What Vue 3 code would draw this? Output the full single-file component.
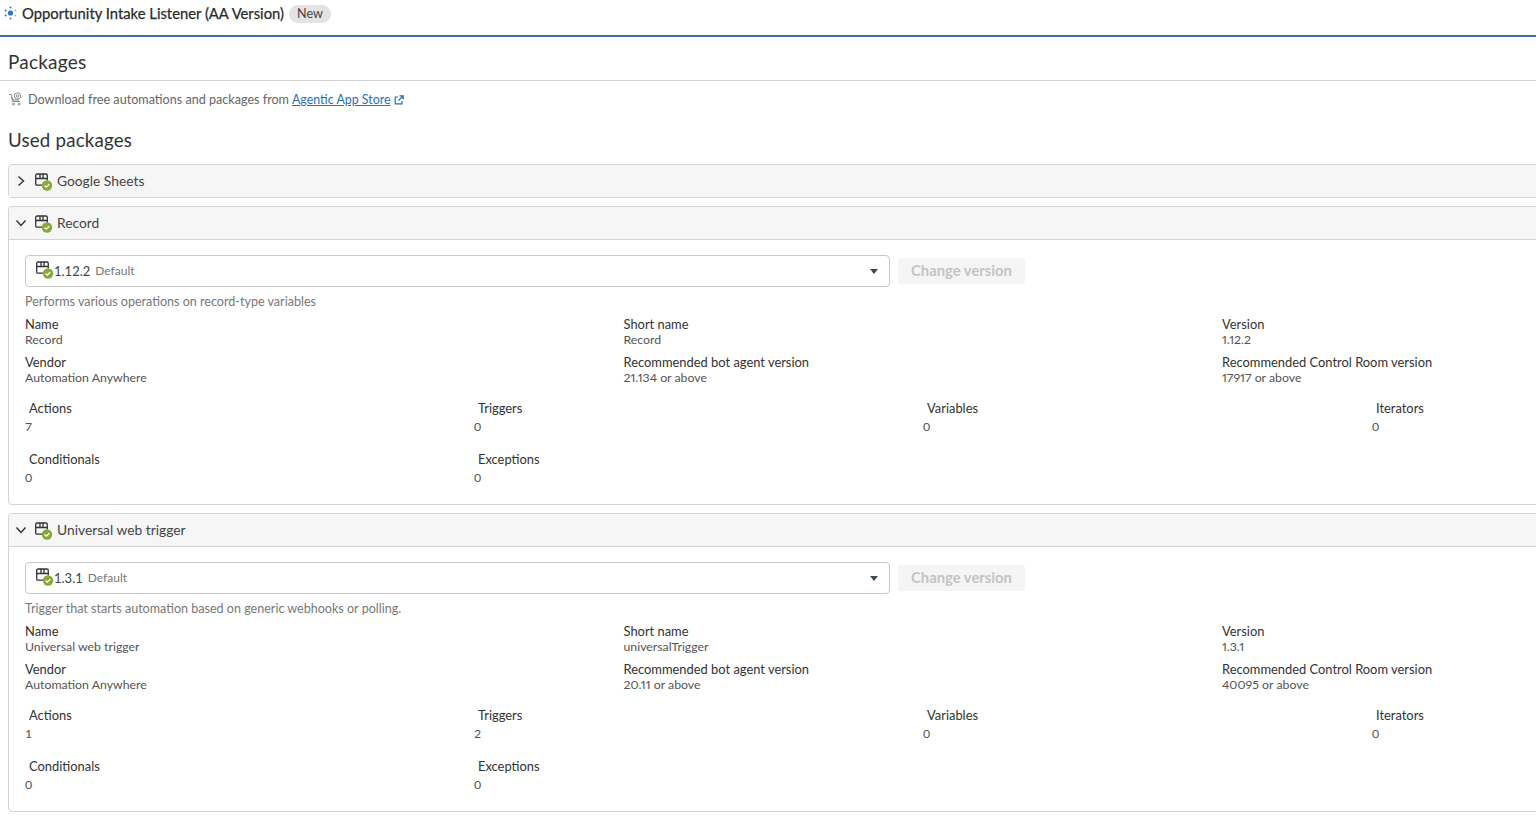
<template>
	<div class="page">
		<header class="title-bar">
			<svg class="bot-icon" width="14" height="14" viewBox="0 0 14 14">
				<circle cx="7.5" cy="7" r="2.6" fill="#2f6fc4" />
				<circle cx="7.5" cy="1.6" r="1" fill="#2f6fc4" />
				<circle cx="7.5" cy="12.4" r="1" fill="#2f6fc4" />
				<circle cx="2.6" cy="4.4" r="1" fill="#2f6fc4" />
				<circle cx="2.6" cy="9.6" r="1" fill="#2f6fc4" />
				<circle cx="12.4" cy="4.4" r="0.8" fill="#7aa5dc" />
				<circle cx="12.4" cy="9.6" r="0.8" fill="#7aa5dc" />
			</svg>
			<span class="bot-name">Opportunity Intake Listener (AA Version)</span>
			<span class="badge">New</span>
		</header>

		<h2 class="section-title">Packages</h2>

		<p class="store-note">
			<svg class="cart" width="16" height="15" viewBox="0 0 16 15" fill="none" stroke="#8a8a8a" stroke-width="1">
				<path d="M1 2.5h2l1.5 7h7.5" />
				<path d="M4 5l1 3h6" />
				<circle cx="9.5" cy="4" r="3.2" />
				<circle cx="9.5" cy="4" r="1.2" />
				<circle cx="5.5" cy="12" r="1" />
				<circle cx="11" cy="12" r="1" />
			</svg>
			<span>Download free automations and packages from</span>
			<a class="store-link">Agentic App Store</a>
			<svg class="ext" width="10" height="10" viewBox="0 0 10 10" fill="none" stroke="#2a6fb5" stroke-width="1.2">
				<path d="M4 2H1.2v6.8H8V6" />
				<path d="M5.5 0.8h3.7v3.7M9 1L4.5 5.5" />
			</svg>
		</p>

		<h3 class="used-title">Used packages</h3>

		<div class="panels">
			<section v-for="pkg in packages" :key="pkg.name" class="panel">
				<div class="panel-head">
					<svg class="chevron" width="12" height="12" viewBox="0 0 12 12" fill="none" stroke="#333" stroke-width="1.4">
						<path v-if="pkg.open" d="M1.5 3.5L6 8.5l4.5-5" />
						<path v-else d="M3.5 1.5L8.5 6l-5 4.5" />
					</svg>
					<svg class="pkg-icon" width="19" height="19" viewBox="0 0 19 19">
						<path d="M1.7 5.5V3.5q0-1.500 1.500-1.500h8.600q1.500 0 1.500 1.500v2 M1.700 5.500v6.500q0 1.200 1.200 1.200h5.500 M1.700 6.500h11.600 M6 2v4.500 M9 2v4.500 M13.300 5.500v3" fill="none" stroke="#333" stroke-width="1.300" />
						<circle cx="13" cy="13.500" r="5.200" fill="#8aa83a" />
						<path d="M10.600 13.500l1.700 1.700 3-3" fill="none" stroke="#fff" stroke-width="1.300" />
					</svg>
					<span class="pkg-name">{{ pkg.name }}</span>
				</div>

				<div v-if="pkg.open" class="panel-body">
					<div class="version-row">
						<div class="version-select">
							<svg class="pkg-icon small" width="19" height="19" viewBox="0 0 19 19">
								<path d="M1.7 5.5V3.5q0-1.500 1.500-1.500h8.600q1.500 0 1.500 1.500v2 M1.700 5.500v6.500q0 1.200 1.200 1.200h5.500 M1.700 6.500h11.600 M6 2v4.500 M9 2v4.500 M13.300 5.500v3" fill="none" stroke="#333" stroke-width="1.300" />
								<circle cx="13" cy="13.500" r="5.200" fill="#8aa83a" />
								<path d="M10.600 13.500l1.700 1.700 3-3" fill="none" stroke="#fff" stroke-width="1.300" />
							</svg>
							<span class="version-no">{{ pkg.version }}</span>
							<span class="version-tag">Default</span>
							<span class="caret"></span>
						</div>
						<button type="button" class="change-btn" disabled>Change version</button>
					</div>

					<p class="description">{{ pkg.description }}</p>

					<div class="info-grid">
						<div v-for="item in pkg.info" :key="item[0]" class="info-item">
							<div class="info-label">{{ item[0] }}</div>
							<div class="info-value">{{ item[1] }}</div>
						</div>
					</div>

					<div class="stats-grid">
						<div v-for="stat in pkg.stats" :key="stat[0]" class="stat-item">
							<div class="stat-label">{{ stat[0] }}</div>
							<div class="stat-value">{{ stat[1] }}</div>
						</div>
					</div>
				</div>
			</section>
		</div>
	</div>
</template>

<script setup>
const packages = [
	{ name: 'Google Sheets', open: false },
	{
		name: 'Record',
		open: true,
		version: '1.12.2',
		description: 'Performs various operations on record-type variables',
		info: [
			['Name', 'Record'],
			['Short name', 'Record'],
			['Version', '1.12.2'],
			['Vendor', 'Automation Anywhere'],
			['Recommended bot agent version', '21.134 or above'],
			['Recommended Control Room version', '17917 or above'],
		],
		stats: [
			['Actions', 7],
			['Triggers', 0],
			['Variables', 0],
			['Iterators', 0],
			['Conditionals', 0],
			['Exceptions', 0],
		],
	},
	{
		name: 'Universal web trigger',
		open: true,
		version: '1.3.1',
		description: 'Trigger that starts automation based on generic webhooks or polling.',
		info: [
			['Name', 'Universal web trigger'],
			['Short name', 'universalTrigger'],
			['Version', '1.3.1'],
			['Vendor', 'Automation Anywhere'],
			['Recommended bot agent version', '20.11 or above'],
			['Recommended Control Room version', '40095 or above'],
		],
		stats: [
			['Actions', 1],
			['Triggers', 2],
			['Variables', 0],
			['Iterators', 0],
			['Conditionals', 0],
			['Exceptions', 0],
		],
	},
];
</script>

<style>
html,
body {
	margin: 0;
	background: #fff;
	overflow: hidden;
}
</style>

<style scoped>
.page {
	width: 1536px;
	height: 818px;
	overflow: hidden;
	font-family: Lato, "Open Sans", sans-serif;
	font-size: 12.5px;
	color: #555;
}

.title-bar {
	display: flex;
	align-items: center;
	height: 37px;
	padding: 0 3px 9px 3px;
	box-sizing: border-box;
	border-bottom: 2px solid #3f6ea8;
}

.bot-icon {
	margin-right: 5px;
}

.bot-name {
	font-size: 14.8px;
	color: #2b2b2b;
	-webkit-text-stroke: 0.25px #2b2b2b;
}

.badge {
	margin: 1px 0 0 5px;
	padding: 0 8px;
	height: 18px;
	line-height: 18px;
	border-radius: 9px;
	background: #e3e3e3;
	font-size: 12.6px;
	color: #444;
}

.section-title {
	margin: 0;
	height: 44px;
	padding: 15px 8px 0;
	box-sizing: border-box;
	font-size: 19px;
	font-weight: 400;
	line-height: 20px;
	color: #333;
	border-bottom: 1px solid #d2d2d2;
	letter-spacing: 0.2px;
}

.store-note {
	display: flex;
	align-items: center;
	margin: 0;
	padding: 8px 8px 0;
	height: 21px;
	font-size: 12.6px;
	color: #666;
}

.cart {
	margin-right: 4px;
}

.store-link {
	margin-left: 3px;
	font-size: 12.4px;
	color: #2a6fb5;
	text-decoration: underline;
}

.ext {
	margin-left: 3px;
}

.used-title {
	margin: 0;
	padding: 20px 8px 13px;
	font-size: 18.7px;
	font-weight: 400;
	line-height: 21px;
	color: #333;
	letter-spacing: 0.2px;
}

.panels {
	display: flex;
	flex-direction: column;
	gap: 8px;
	margin-left: 8px;
	width: 1860px;
}

.panel {
	border: 1px solid #d4d4d4;
	border-radius: 4px;
}

.panel-head {
	display: flex;
	align-items: center;
	height: 32px;
	padding: 0 0 2px 6px;
	box-sizing: border-box;
	background: #f6f6f6;
	border-radius: 4px 4px 0 0;
}

.panel-body {
	padding: 15px 16px 0;
	height: 249px;
	border-top: 1px solid #d4d4d4;
}

.chevron {
	margin: 2px 7px 0 0;
}

.pkg-icon {
	margin: 3px 4px 0 0;
}

.pkg-name {
	font-size: 13.8px;
	color: #444;
}

.version-row {
	display: flex;
	align-items: center;
	gap: 8px;
}

.version-select {
	position: relative;
	display: flex;
	align-items: center;
	width: 865px;
	height: 32px;
	box-sizing: border-box;
	padding: 0 0 1px 9px;
	border: 1px solid #c9c9c9;
	border-radius: 4px;
}

.pkg-icon.small {
	margin: -2px 0 0 0;
}

.version-no {
	font-size: 13px;
	color: #444;
}

.version-tag {
	margin-left: 5px;
	font-size: 12px;
	color: #777;
}

.caret {
	position: absolute;
	right: 11px;
	top: 13px;
	border-left: 4px solid transparent;
	border-right: 4px solid transparent;
	border-top: 5px solid #3c4a5c;
}

.change-btn {
	width: 127px;
	height: 26px;
	padding: 0 0 2px;
	border: 0;
	border-radius: 3px;
	background: #f5f5f5;
	color: #c4c4c4;
	font-family: inherit;
	font-size: 14.8px;
	font-weight: 700;
}

.description {
	margin: 7px 0 8px;
	line-height: 15px;
	font-size: 12.55px;
	color: #777;
}

.info-grid {
	display: grid;
	grid-template-columns: repeat(3, 598.5px);
	row-gap: 8px;
}

.info-label {
	color: #333;
	font-size: 12.9px;
	line-height: 15px;
}

.info-value {
	color: #555;
	font-size: 12.3px;
	line-height: 15px;
	font-variant-numeric: proportional-nums;
}

.stats-grid {
	display: grid;
	grid-template-columns: repeat(4, 449px);
	margin-top: 16px;
	row-gap: 18px;
}

.stat-label {
	padding-left: 4px;
	color: #333;
	font-size: 12.9px;
	line-height: 15px;
}

.stat-value {
	margin-top: 3px;
	color: #555;
	font-size: 12.3px;
	line-height: 15px;
}
</style>
